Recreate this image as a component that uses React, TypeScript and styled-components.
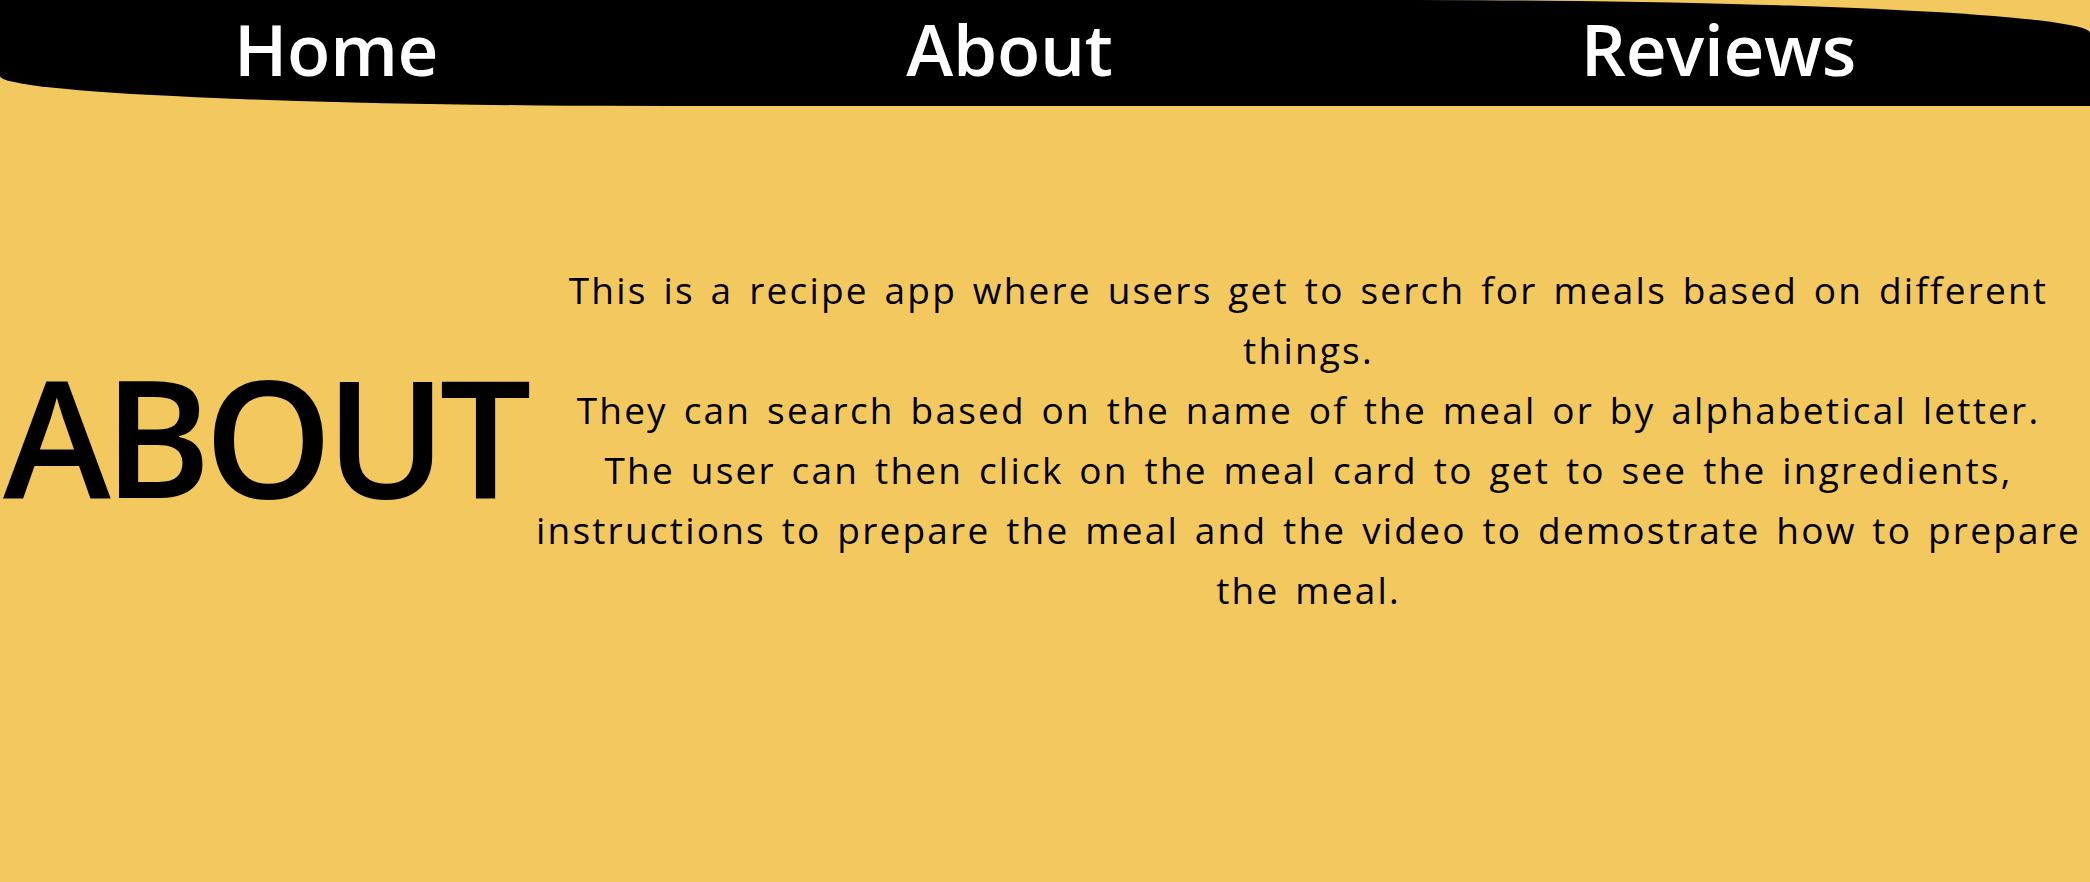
import React from "react";
import styled, { createGlobalStyle } from "styled-components";

const GlobalStyle = createGlobalStyle`
  html, body {
    margin: 0;
    padding: 0;
    background: #f3c95f;
    font-family: "Open Sans", "Noto Sans", sans-serif;
    color: #000;
  }
  * { box-sizing: border-box; }
`;

const Nav = styled.nav`
  height: 106px;
  background: #000;
  display: flex;
  justify-content: space-around;
  align-items: flex-start;
  border-radius: 0 677px 0 670px / 0 33px 0 30px;
`;

const NavLink = styled.a`
  color: #fff;
  text-decoration: none;
  font-family: "Open Sans", sans-serif;
  font-weight: 600;
  font-size: 71px;
  line-height: 1;
  margin-top: 13px;
  letter-spacing: -0.3px;
`;

const Main = styled.main`
  display: flex;
  align-items: center;
  height: 668px;
`;

const Title = styled.h1`
  flex: 0 0 527px;
  margin: 0 0 10px;
  padding-left: 3px;
  font-family: "Open Sans", sans-serif;
  font-weight: 600;
  font-size: 163px;
  line-height: 1;
  letter-spacing: -7px;
`;

const Text = styled.p`
  flex: 1;
  margin: 0;
  text-align: center;
  font-family: "Open Sans", sans-serif;
  font-weight: 400;
  font-size: 37px;
  line-height: 60px;
  letter-spacing: 2.2px;
  word-spacing: 4px;
`;

export default function App() {
  return (
    <>
      <GlobalStyle />
      <Nav>
        <NavLink href="#">Home</NavLink>
        <NavLink href="#">About</NavLink>
        <NavLink href="#">Reviews</NavLink>
      </Nav>
      <Main>
        <Title>ABOUT</Title>
        <Text>
          This is a recipe app where users get to serch for meals based on different things.
          <br />
          They can search based on the name of the meal or by alphabetical letter.
          <br />
          The user can then click on the meal card to get to see the ingredients, instructions to prepare the meal and the video to demostrate how to prepare the meal.
        </Text>
      </Main>
    </>
  );
}
